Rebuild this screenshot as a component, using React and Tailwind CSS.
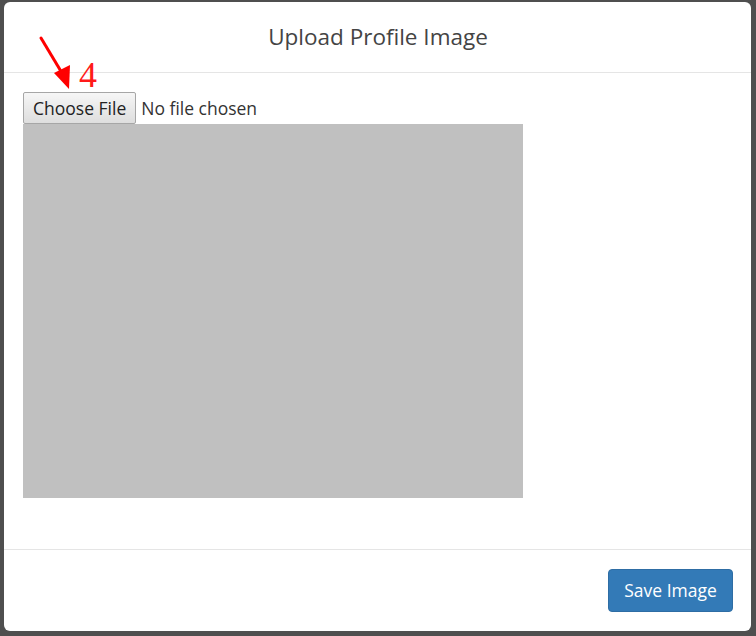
import React from "react";

export default function App() {
  return (
    <div className="w-[756px] h-[636px] bg-[#4f4f4f] pt-[2px] pl-[4px] overflow-hidden" style={{ fontFamily: "'Open Sans', sans-serif" }}>
      <div className="relative w-[747px] h-[629px] bg-white rounded-[6px] flex flex-col">
        {/* Header */}
        <div className="h-[71px] border-b border-[#e5e5e5] flex items-center justify-center">
          <h4 className="text-[22.5px] text-[#444] leading-none pl-[1px]">Upload Profile Image</h4>
        </div>

        {/* Body */}
        <div className="relative pl-[19px] pt-[19px] h-[476px]">
          <div className="flex items-center h-[32px]">
            <div className="h-[32px] px-[9px] flex items-center border border-[#a6a6a6] rounded-[2px] bg-gradient-to-b from-[#f6f6f6] to-[#dedede] text-[17.5px] text-[#222]">
              Choose File
            </div>
            <span className="ml-[5px] text-[17.5px] text-[#333]">No file chosen</span>
          </div>
          <div className="w-[500px] h-[374px] bg-[#c0c0c0]" />

          {/* annotation */}
          <svg className="absolute left-[30px] top-[-38px]" width="80" height="60" viewBox="0 0 80 60">
            <line x1="7" y1="3" x2="28" y2="38" stroke="#ff0000" strokeWidth="3" strokeLinecap="round" />
            <polygon points="20,38 36,30 35,54" fill="#ff0000" />
          </svg>
          <span className="absolute left-[75px] top-[-16px] text-[36px] leading-none text-[#ff1a1a]" style={{ fontFamily: "'Liberation Serif', serif" }}>4</span>
        </div>

        {/* Footer */}
        <div className="flex-1 border-t border-[#e5e5e5] flex justify-end items-start pt-[19px] pr-[18px]">
          <button className="h-[43px] w-[125px] rounded-[4px] bg-[#337ab7] border border-[#2e6da4] text-white text-[17.5px]">
            Save Image
          </button>
        </div>
      </div>
    </div>
  );
}
